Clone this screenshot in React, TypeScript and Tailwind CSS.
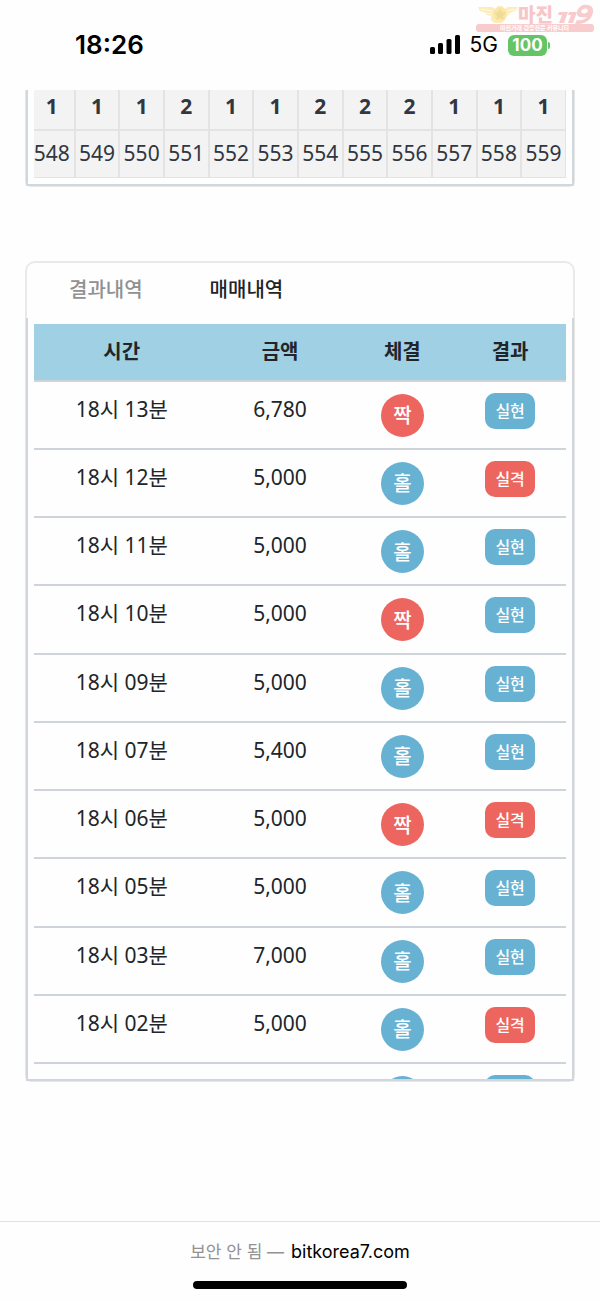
import React from 'react';

const rounds = [
  { result: 1, no: 548 },
  { result: 1, no: 549 },
  { result: 1, no: 550 },
  { result: 2, no: 551 },
  { result: 1, no: 552 },
  { result: 1, no: 553 },
  { result: 2, no: 554 },
  { result: 2, no: 555 },
  { result: 2, no: 556 },
  { result: 1, no: 557 },
  { result: 1, no: 558 },
  { result: 1, no: 559 },
];

type Side = '짝' | '홀';
type Outcome = '실현' | '실격';
interface Trade {
  time: string;
  amount: string;
  side: Side;
  outcome: Outcome;
}

const trades: Trade[] = [
  { time: '18시 13분', amount: '6,780', side: '짝', outcome: '실현' },
  { time: '18시 12분', amount: '5,000', side: '홀', outcome: '실격' },
  { time: '18시 11분', amount: '5,000', side: '홀', outcome: '실현' },
  { time: '18시 10분', amount: '5,000', side: '짝', outcome: '실현' },
  { time: '18시 09분', amount: '5,000', side: '홀', outcome: '실현' },
  { time: '18시 07분', amount: '5,400', side: '홀', outcome: '실현' },
  { time: '18시 06분', amount: '5,000', side: '짝', outcome: '실격' },
  { time: '18시 05분', amount: '5,000', side: '홀', outcome: '실현' },
  { time: '18시 03분', amount: '7,000', side: '홀', outcome: '실현' },
  { time: '18시 02분', amount: '5,000', side: '홀', outcome: '실격' },
  { time: '', amount: '', side: '홀', outcome: '실현' },
];

function Watermark() {
  return (
    <svg
      className="absolute top-0 right-0 h-9 w-[126px] font-['Noto_Sans_CJK_KR',sans-serif]"
      viewBox="0 0 126 36"
      aria-hidden="true"
    >
      <path
        d="M4 7h14l3 2 3-3h4l3 3 3-2h10l-3 4-4 1-2 3-4 1v4l-3 3h-8l-3-3v-4l-4-1-3-3-4-1z"
        fill="#fbecb9"
      />
      <circle cx="26" cy="14" r="7" fill="#fae6a8" />
      <path d="M26 8l2 4 4 1-3 3 1 4-4-2-4 2 1-4-3-3 4-1z" fill="#f1dc96" />
      <path d="M7 9l11 2M11 13l7 1M33 11l8-2M33 14l5-1" stroke="#fffbe6" strokeWidth="1" fill="none" />
      <rect x="2" y="24" width="118" height="8" rx="3" fill="#f8cccd" />
      <text x="44" y="22" fontSize="19" fontWeight="900" fill="#f8c6c8">
        마진
      </text>
      <path d="M85 12h9l-4 11h-5l3-8h-4zM95 12h8l-4 11h-5l3-8h-3z" fill="#f8cccd" />
      <path
        fillRule="evenodd"
        d="M109 5c7-1 11 2 10 7-1 7-6 11-14 12h-4l2-4c5 1 8-1 10-3-6 1-11 0-10-5 1-4 3-6 6-7zm1 4c-2 0-3 2-3 3 1 2 6 2 7-1 0-2-2-3-4-2z"
        fill="#f8cccd"
      />
      <text x="26" y="30" fontSize="6" fontWeight="700" fill="#ffffff">
        마진거래 검증전문 커뮤니티
      </text>
    </svg>
  );
}

function StatusBar() {
  return (
    <header className="relative flex h-[90px] items-start justify-between pt-[30px] pr-[50px] pl-[75px] font-[Inter,sans-serif] text-black">
      <Watermark />
      <time className="text-[26px] leading-[30px] font-semibold">18:26</time>
      <div className="flex h-[30px] items-center">
        <svg className="h-5 w-[30px]" viewBox="0 0 30 20" aria-label="신호">
          <rect x="0" y="12" width="5" height="7" rx="1.5" />
          <rect x="8" y="8" width="5" height="11" rx="1.5" />
          <rect x="16.5" y="4" width="5" height="15" rx="1.5" />
          <rect x="25" y="0" width="5" height="19" rx="1.5" />
        </svg>
        <span className="ml-[10px] text-[21px] leading-[30px]">5G</span>
        <span className="ml-[10px] flex h-[21px] w-[39px] items-center justify-center rounded-[6px] bg-[#65c466] text-[17px] leading-[21px] font-bold text-white">
          100
        </span>
        <span className="ml-px h-[7px] w-[2px] rounded-r-full bg-[#65c466]" />
      </div>
    </header>
  );
}

function RoundsPanel() {
  return (
    <section className="rounded-b-md border-x border-b border-[#e6e6e6]">
      <div className="border-x-2 border-b-2 border-[#d0d8dd] px-[6px] pb-[6px]">
        <div className="overflow-hidden">
          <table className="-ml-1 w-[calc(100%+5px)] table-fixed border-collapse bg-[#f3f3f3] text-center text-[21px] text-[#30373f]">
            <tbody>
              <tr>
                {rounds.map((r) => (
                  <th
                    key={r.no}
                    scope="col"
                    className="h-10 border-r-2 border-b-2 border-[#e3e3e3] p-0 pb-2 leading-[30px] font-bold"
                  >
                    {r.result}
                  </th>
                ))}
              </tr>
              <tr>
                {rounds.map((r) => (
                  <td
                    key={r.no}
                    className="h-[47px] border-r-2 border-b border-[#e3e3e3] p-0 pb-px leading-[30px]"
                  >
                    {r.no}
                  </td>
                ))}
              </tr>
            </tbody>
          </table>
        </div>
      </div>
    </section>
  );
}

function TradeRow({ trade }: { trade: Trade }) {
  return (
    <tr className="h-[68px] border-b-2 border-[#ced4da] align-top last:border-b-0">
      <td className="pt-3 text-[21px] leading-[30px]">{trade.time}</td>
      <td className="pt-3 text-[21px] leading-[30px]">{trade.amount}</td>
      <td className="pt-3">
        <span
          className={`mx-auto flex size-[43px] items-center justify-center rounded-full pt-[2px] text-xl font-medium text-white ${
            trade.side === '짝' ? 'bg-[#ec655e]' : 'bg-[#67b1d2]'
          }`}
        >
          {trade.side}
        </span>
      </td>
      <td className="pt-[11px]">
        <span
          className={`mx-auto flex h-9 w-[50px] items-center justify-center rounded-[10px] text-base font-medium text-white ${
            trade.outcome === '실격' ? 'bg-[#ec655e]' : 'bg-[#67b1d2]'
          }`}
        >
          {trade.outcome}
        </span>
      </td>
    </tr>
  );
}

function HistoryPanel() {
  return (
    <section className="mt-[74px]">
      <div
        className="flex h-[57px] items-center gap-[67px] rounded-t-[10px] border-2 border-b-0 border-[#e8e9ea] pl-[42px] text-xl leading-[30px] font-medium"
        role="tablist"
      >
        <button type="button" role="tab" aria-selected="false" className="text-[#8f9193]">
          결과내역
        </button>
        <button type="button" role="tab" aria-selected="true" className="text-[#212529]">
          매매내역
        </button>
      </div>
      <div className="rounded-b-md border-x border-b border-[#e6e6e6]">
        <div className="h-[763px] overflow-hidden border-x-2 border-b-2 border-[#d0d6db] px-[6px] pt-[6px]">
          <table className="h-[808px] w-full table-fixed border-collapse text-center text-[#212529]">
            <colgroup>
              <col className="w-[33%]" />
              <col className="w-[26.5%]" />
              <col className="w-[19.5%]" />
              <col className="w-[21%]" />
            </colgroup>
            <thead>
              <tr className="h-[57px] border-b-2 border-[#ced4da] bg-[#9fd0e3] text-xl leading-[30px]">
                <th scope="col" className="font-bold">시간</th>
                <th scope="col" className="font-bold">금액</th>
                <th scope="col" className="font-bold">체결</th>
                <th scope="col" className="font-bold">결과</th>
              </tr>
            </thead>
            <tbody>
              {trades.map((t, i) => (
                <TradeRow key={i} trade={t} />
              ))}
            </tbody>
          </table>
        </div>
      </div>
    </section>
  );
}

export default function App() {
  return (
    <div className="bg-[#fefefe] font-['Noto_Sans','Noto_Sans_CJK_KR',sans-serif]">
      <StatusBar />
      <main className="px-[25px]">
        <RoundsPanel />
        <HistoryPanel />
      </main>
      <footer className="mt-[139px] flex flex-col items-center border-t border-[#e2e2e2] pt-4 pb-3 font-[Inter,'Noto_Sans_CJK_KR',sans-serif]">
        <p className="flex gap-[7px] text-[18px] leading-[28px]">
          <span className="text-[17px] text-[#929292]">보안 안 됨 —</span>
          <a href="http://bitkorea7.com" className="text-black">
            bitkorea7.com
          </a>
        </p>
        <div className="mt-[15px] h-2 w-[214px] rounded-full bg-black" />
      </footer>
    </div>
  );
}
